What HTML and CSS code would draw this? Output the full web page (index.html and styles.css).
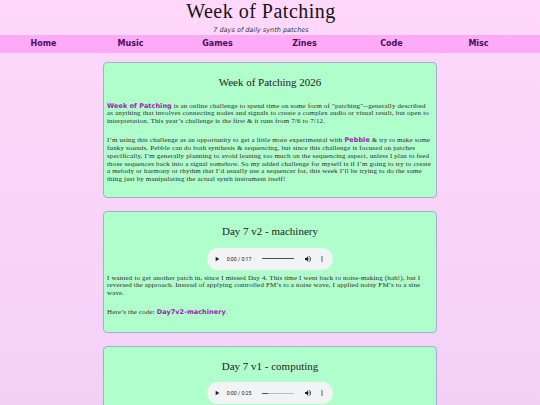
FILE: index.html
```html
<!DOCTYPE html>
<html lang="en">
<head>
<meta charset="utf-8">
<title>Week of Patching</title>
<link rel="stylesheet" href="styles.css">
</head>
<body>
<header class="site-header">
  <h1 class="site-title">Week of Patching</h1>
  <p class="site-sub">7 days of daily synth patches</p>
</header>
<nav class="nav">
  <a href="#">Home</a>
  <a href="#">Music</a>
  <a href="#">Games</a>
  <a href="#">Zines</a>
  <a href="#">Code</a>
  <a href="#">Misc</a>
</nav>
<main class="main">
  <section class="card intro">
    <h2 class="card-title">Week of Patching 2026</h2>
    <p><a class="link" href="#">Week of Patching</a><span> is an online challenge to spend time on some form of "patching"--generally described</span> as anything that involves connecting nodes and signals to create a complex audio or visual result, but open to interpretation. This year’s challenge is the first &amp; it runs from 7/6 to 7/12.</p>
    <p>I’m using this challenge as an opportunity to get a little more experimental with <a class="link" href="#">Pebble</a><span> &amp; try to make some</span> funky sounds. Pebble can do both synthesis &amp; sequencing, but since this challenge is focused on patches specifically, I’m generally planning to avoid leaning too much on the sequencing aspect, unless I plan to feed those sequences back into a signal somehow. So my added challenge for myself is if I’m going to try to create a melody or harmony or rhythm that I’d usually use a sequencer for, this week I’ll be trying to do the same thing just by manipulating the actual synth instrument itself!</p>
  </section>

  <section class="card">
    <h2 class="card-title">Day 7 v2 - machinery</h2>
    <div class="player">
      <svg class="ico play" viewBox="0 0 24 24"><path d="M8 5v14l11-7z"/></svg>
      <span class="time">0:00 / 0:17</span>
      <span class="track"><span class="fill full"></span></span>
      <svg class="ico vol" viewBox="0 0 24 24"><path d="M3 9v6h4l5 5V4L7 9H3zm13.5 3c0-1.770-1.020-3.290-2.500-4.030v8.050c1.480-.730 2.500-2.250 2.500-4.020zM14 3.230v2.060c2.890.860 5 3.540 5 6.710s-2.110 5.850-5 6.710v2.060c4.010-.910 7-4.490 7-8.770s-2.990-7.860-7-8.770z"/></svg>
      <svg class="ico menu" viewBox="0 0 24 24"><path d="M12 8c1.1 0 2-.9 2-2s-.9-2-2-2-2 .9-2 2 .9 2 2 2zm0 2c-1.1 0-2 .9-2 2s.9 2 2 2 2-.9 2-2-.9-2-2-2zm0 6c-1.1 0-2 .9-2 2s.9 2 2 2 2-.9 2-2-.9-2-2-2z"/></svg>
    </div>
    <p>I wanted to get another patch in, since I missed Day 4. This time I went back to noise-making (hah!), but I reversed the approach. Instead of applying controlled FM’s to a noise wave, I applied noisy FM’s to a sine wave.</p>
    <p>Here’s the code: <a class="link" href="#">Day7v2-machinery</a>.</p>
  </section>

  <section class="card">
    <h2 class="card-title">Day 7 v1 - computing</h2>
    <div class="player">
      <svg class="ico play" viewBox="0 0 24 24"><path d="M8 5v14l11-7z"/></svg>
      <span class="time">0:00 / 0:25</span>
      <span class="track"><span class="fill part"></span></span>
      <svg class="ico vol" viewBox="0 0 24 24"><path d="M3 9v6h4l5 5V4L7 9H3zm13.5 3c0-1.770-1.020-3.290-2.500-4.030v8.050c1.480-.730 2.500-2.250 2.500-4.020zM14 3.230v2.060c2.890.860 5 3.540 5 6.710s-2.110 5.850-5 6.710v2.060c4.010-.910 7-4.490 7-8.770s-2.990-7.860-7-8.770z"/></svg>
      <svg class="ico menu" viewBox="0 0 24 24"><path d="M12 8c1.1 0 2-.9 2-2s-.9-2-2-2-2 .9-2 2 .9 2 2 2zm0 2c-1.1 0-2 .9-2 2s.9 2 2 2 2-.9 2-2-.9-2-2-2zm0 6c-1.1 0-2 .9-2 2s.9 2 2 2 2-.9 2-2-.9-2-2-2z"/></svg>
    </div>
  </section>
</main>
</body>
</html>
```

FILE: styles.css
```css
html {
  background: linear-gradient(#ffd8fb, #f3d1f6) fixed;
}
body {
  margin: 0;
  font-family: "Liberation Serif", "DejaVu Serif", serif;
  color: #2a2a2a;
}
.site-header {
  width: 522px;
  text-align: center;
}
.site-title {
  margin: 0;
  font-family: "Liberation Serif", serif;
  font-weight: normal;
  font-size: 20px;
  letter-spacing: 0.5px;
  line-height: 22.2px;
  color: #151515;
}
.site-sub {
  margin: 3.8px 0 0;
  font-family: "DejaVu Sans", sans-serif;
  font-style: italic;
  font-size: 6.5px;
  line-height: 8px;
  color: #333;
}
.nav {
  margin-top: 1px;
  height: 18px;
  background: #ffaaf6;
  display: grid;
  grid-template-columns: repeat(6, 87px);
  align-items: center;
}
.nav a {
  text-align: center;
  font-family: "DejaVu Sans", sans-serif;
  font-weight: bold;
  font-size: 8px;
  line-height: 10px;
  color: #4a0d5c;
  text-decoration: none;
}
.main {
  padding-top: 9px;
  display: flex;
  flex-direction: column;
  align-items: center;
  gap: 13px;
}
.card {
  width: 326px;
  padding: 0 3px 4px;
  background: #b0fecb;
  border: 1px solid #9fb1cc;
  border-radius: 4px;
}
.card.intro {
  padding-bottom: 2px;
}
.card-title {
  margin: 13px 0 10px;
  text-align: center;
  font-weight: normal;
  font-size: 11px;
  line-height: 12.5px;
  color: #222;
}
.intro .card-title {
  margin-bottom: 14px;
}
.card p {
  margin: 11px 0;
  font-size: 7px;
  letter-spacing: 0.15px;
  line-height: 7.85px;
}
.player + p {
  margin-top: 5px;
}
.link {
  font-family: "DejaVu Sans", sans-serif;
  font-weight: bold;
  font-size: 6.5px;
  letter-spacing: 0.05px;
  color: #9b20b2;
  text-decoration: none;
}
.player {
  width: 126px;
  height: 22px;
  margin: 0 auto;
  box-sizing: border-box;
  padding-left: 6px;
  border-radius: 11px;
  background: #f1f3f4;
  display: flex;
  align-items: center;
}
.ico {
  width: 8px;
  height: 8px;
  flex: none;
  fill: #1f1f1f;
}
.time {
  margin-left: 5.7px;
  width: 25px;
  font-family: Roboto, "DejaVu Sans", sans-serif;
  font-size: 5.2px;
  color: #222;
  white-space: nowrap;
}
.track {
  margin-left: 10px;
  width: 32px;
  height: 1.5px;
  border-radius: 1px;
  background: #b9bbbd;
  display: flex;
}
.fill {
  height: 100%;
  border-radius: 1px;
  background: #4d4d4d;
}
.fill.full { width: 100%; }
.fill.part { width: 6px; }
.vol {
  margin-left: 10.3px;
}
.menu {
  margin-left: 6px;
}
```
